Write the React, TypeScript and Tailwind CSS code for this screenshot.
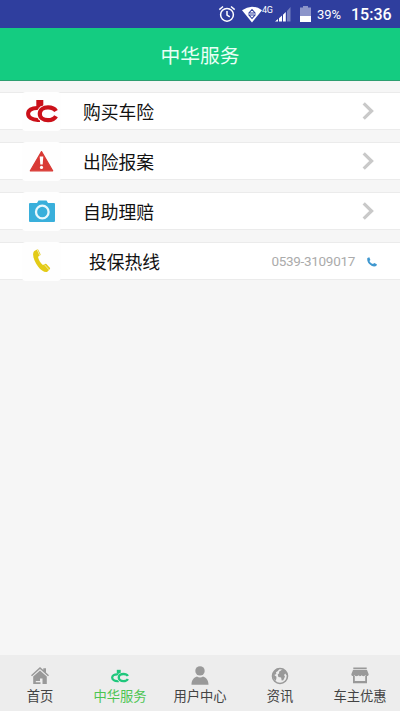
import type { ReactNode } from "react";

type IconProps = { className?: string };

const LogoIcon = ({ className }: IconProps) => (
  <svg viewBox="0 0 32 24" className={className} stroke="currentColor">
    <path d="M10.300 1h7v6.500h-7z" fill="currentColor" stroke="none" />
    <path d="M14 8.900h-3C6 8.900 2.100 11.300 2.100 14.800s3.900 6.200 9.400 6.200H14" fill="none" strokeWidth="4" />
    <ellipse cx="21.800" cy="14.900" rx="11.300" ry="9.400" className="fill-[var(--logo-bg)]" stroke="none" />
    <path d="M30 12C28.700 9.800 25.700 8.400 22 8.400c-4.800 0-8.200 2.700-8.200 6.400s3.400 6.400 8.200 6.400c3.700 0 6.700-1.500 8-3.900" fill="none" strokeWidth="4.200" />
  </svg>
);

const WarningIcon = () => (
  <svg viewBox="0 0 26 22" className="h-[22px] w-[26px]">
    <path d="M12.500 1.600 23.700 20.800H1.300z" fill="#d93a35" stroke="#d93a35" strokeWidth="1.200" strokeLinejoin="round" />
    <path d="M10.700 6.500h3.600l-.6 8h-2.400z" fill="#fff" />
    <circle cx="12.500" cy="17.400" r="1.600" fill="#fff" />
  </svg>
);

const CameraIcon = () => (
  <svg viewBox="0 0 26 22" className="h-[22px] w-[26px]">
    <path d="M1 3h7l1.500-2.500h8L19 3h6q1 0 1 1v17q0 1-1 1H1q-1 0-1-1V4q0-1 1-1z" fill="#39afdb" />
    <circle cx="13.300" cy="12" r="6.300" fill="none" stroke="#e9f8fd" strokeWidth="2.300" />
  </svg>
);

const PhoneIcon = () => (
  <svg viewBox="0 0 20 26" className="h-[26px] w-[20px]" fill="#e3cb17">
    <path d="m2 3.200 3.400-2 .9.500 2.300 4.600-.3 1-2.300 1.500c.5 3 2.400 6.300 4.900 8.200l2.500-1.200 1 .2 3.700 3.900-.1 1-2.700 2.900c-2.500.9-6.300-1.400-9.100-5.100C2.300 13.600-.4 6.500 2 3.200z" />
    <path d="m5 1.300 3 6.600M12.300 16.500l4.600 5.200" stroke="#fff" strokeWidth=".6" fill="none" />
  </svg>
);

const CallIcon = () => (
  <svg viewBox="0 0 10 10" className="h-[10px] w-[10px]" fill="#3f97cf">
    <path d="M.4 1.100 2.300.2 3.400 3 2.400 4.100C3.200 5.700 4.400 6.700 6 7.100L7.200 6.100 9.900 7.200 9.300 9C6.900 10.200 4.100 9 2 6.800.5 5.100-.1 2.800.4 1.100z" />
  </svg>
);

const ArrowIcon = () => (
  <svg viewBox="0 0 12 18" className="h-[18px] w-3" fill="none" stroke="#c9c9c9" strokeWidth="3.200">
    <path d="m1.700 1.300 7.900 7.700-7.900 7.700" />
  </svg>
);

const HomeIcon = () => (
  <svg viewBox="0 0 18 17" className="h-[17px] w-[18px]" fill="#999">
    <path d="M0 8.300 9 0l3.300 3V1.200H15v4.300l3 2.800-1 1L9 2.100 1 9.300z" />
    <path d="M2.200 9.600 9 3.500l6.800 6.100V17h-4.300v-5.500H9V14H4.800v1.200h4.700V17H2.200z" />
  </svg>
);

const UserIcon = () => (
  <svg viewBox="0 0 18 19" className="h-[19px] w-[18px]" fill="#999">
    <circle cx="9" cy="4.900" r="4.700" />
    <path d="M.5 18.800c.1-5 2.400-7.300 5.500-8.300 1.800 1.200 4.200 1.200 6 0 3.100 1 5.400 3.300 5.500 8.300z" />
  </svg>
);

const GlobeIcon = () => (
  <svg viewBox="0 0 18 18" className="h-[18px] w-[18px]">
    <circle cx="9" cy="9" r="7.500" fill="none" stroke="#999" strokeWidth="1.600" />
    <path d="M2 5.500 5.300 2l3.200-.3L6.900 4 5 5.200l.3 1.700-2 1.100 2.200 1.700-.2 2.200-.8 2-2.300-3zM8 4.800l3.700-2.600 3.100 1.700 1.600 3.800-1.200.3-.9-1.400-1.300 1.300 1 1.500-1.700 3.800-1.600.3-.6-3-2.700-.6-.7-2.300 1.500-1.300z" fill="#999" />
  </svg>
);

const ShopIcon = () => (
  <svg viewBox="0 0 18 17" className="h-[17px] w-[18px]" fill="#999">
    <path d="M2.300.5h13.400v1.700H2.300zM2 3h14l1.700 4.200c0 2.200-3 2.400-3.500.8-.6 1.600-3 1.600-3.500 0-.5 1.600-2.900 1.600-3.400 0-.5 1.600-2.900 1.600-3.500 0C3.300 9.600.3 9.400.3 7.200z" />
    <path d="M2 9h1.800v5h10.400V9H16v7.300H2z" />
  </svg>
);

const StatusBar = () => (
  <div className="flex h-7 items-center bg-[#2f3e9e] pl-[218px] font-[Roboto,sans-serif] text-white">
    <svg viewBox="0 0 18 18" className="h-[18px] w-[18px] shrink-0" fill="none" stroke="#fff" strokeWidth="1.500">
      <circle cx="9" cy="9.800" r="6.400" />
      <path d="M1.300 4.600 5 1.500M16.700 4.600 13 1.500M9 6v4.200l2.800 1.700" />
    </svg>
    <svg viewBox="0 0 20 17" className="ml-[6px] h-[17px] w-5 shrink-0">
      <path d="M0 4.200Q10-2.800 20 4.200L10 16.500z" fill="#fff" />
      <path d="M7 7h6l-3-3.500zM7 9h6l-3 3.500z" fill="none" stroke="#2f3e9e" strokeWidth="1.100" />
    </svg>
    <span className="mb-2 w-[13px] text-[9px] leading-none tracking-tight">4G</span>
    <svg viewBox="0 0 16 16" className="h-4 w-4 shrink-0" fill="#fff">
      <path d="M0 15.500 3 13v2.500zM4 12.200 7 9.500v6H4zM8 8.700 10.800 6v9.500H8z" />
      <path d="M12 5 15.500 1v14.500H12z" opacity=".35" />
    </svg>
    <svg viewBox="0 0 11 16" className="ml-[9px] h-4 w-[11px] shrink-0">
      <path d="M3 0h5v1.500h3V10H0V1.500h3z" fill="#fff" opacity=".45" />
      <path d="M0 10h11v6H0z" fill="#fff" />
    </svg>
    <span className="ml-[6px] w-[34px] pt-px text-[13px] leading-none">39%</span>
    <span className="pt-0.5 text-[16px] leading-none font-medium">15:36</span>
  </div>
);

type RowProps = { icon: ReactNode; label: string; labelClass?: string; children: ReactNode };

const ServiceRow = ({ icon, label, labelClass = "pl-[22px]", children }: RowProps) => (
  <div className="flex h-[38px] items-center border-y border-[#ebebeb] bg-white pl-[22px]">
    <div className="-my-1 flex h-[39px] w-[39px] shrink-0 items-center justify-center rounded-sm bg-[#fefefe]">{icon}</div>
    <span className={`pt-0.5 text-[17.800px] leading-none text-[#111] ${labelClass}`}>{label}</span>
    <div className="ml-auto flex items-center">{children}</div>
  </div>
);

const tabs = [
  { label: "首页", icon: <HomeIcon /> },
  { label: "中华服务", icon: <LogoIcon className="h-[14px] w-[18px] text-[#20c77c] [--logo-bg:#ededed]" />, active: true },
  { label: "用户中心", icon: <UserIcon /> },
  { label: "资讯", icon: <GlobeIcon /> },
  { label: "车主优惠", icon: <ShopIcon /> },
];

const App = () => {
  return (
    <div className="flex h-screen flex-col overflow-hidden bg-[#f6f6f6] font-['Noto_Sans_CJK_SC',sans-serif]">
      <StatusBar />
      <header className="flex h-[53px] items-center justify-center border-b border-[#2d9e70] bg-[#14cc81] pt-0.5">
        <h1 className="text-[19.800px] leading-none text-[#e9fff6]">中华服务</h1>
      </header>

      <main className="flex flex-1 flex-col gap-3 pt-[11px]">
        <ServiceRow icon={<LogoIcon className="h-6 w-8 text-[#cb1019] [--logo-bg:#fefefe]" />} label="购买车险">
          <div className="pr-[26px]"><ArrowIcon /></div>
        </ServiceRow>
        <ServiceRow icon={<WarningIcon />} label="出险报案">
          <div className="pr-[26px]"><ArrowIcon /></div>
        </ServiceRow>
        <ServiceRow icon={<CameraIcon />} label="自助理赔">
          <div className="pr-[26px]"><ArrowIcon /></div>
        </ServiceRow>
        <ServiceRow icon={<PhoneIcon />} label="投保热线" labelClass="pl-[28px]">
          <span className="pt-0.5 font-[Roboto,sans-serif] text-[13.500px] leading-none tracking-[-0.300px] text-[#ababab]">0539-3109017</span>
          <div className="pt-px pr-[23px] pl-3"><CallIcon /></div>
        </ServiceRow>
      </main>

      <nav className="grid h-14 grid-cols-5 bg-[#ededed]">
        {tabs.map((tab) => (
          <div key={tab.label} className="flex flex-col items-center pt-[11px]">
            <div className="flex h-[19px] items-center">{tab.icon}</div>
            <span className={`mt-1 text-[13.300px] leading-[14px] whitespace-nowrap ${tab.active ? "text-[#4cc552]" : "text-[#444]"}`}>
              {tab.label}
            </span>
          </div>
        ))}
      </nav>
    </div>
  );
};

export default App;
